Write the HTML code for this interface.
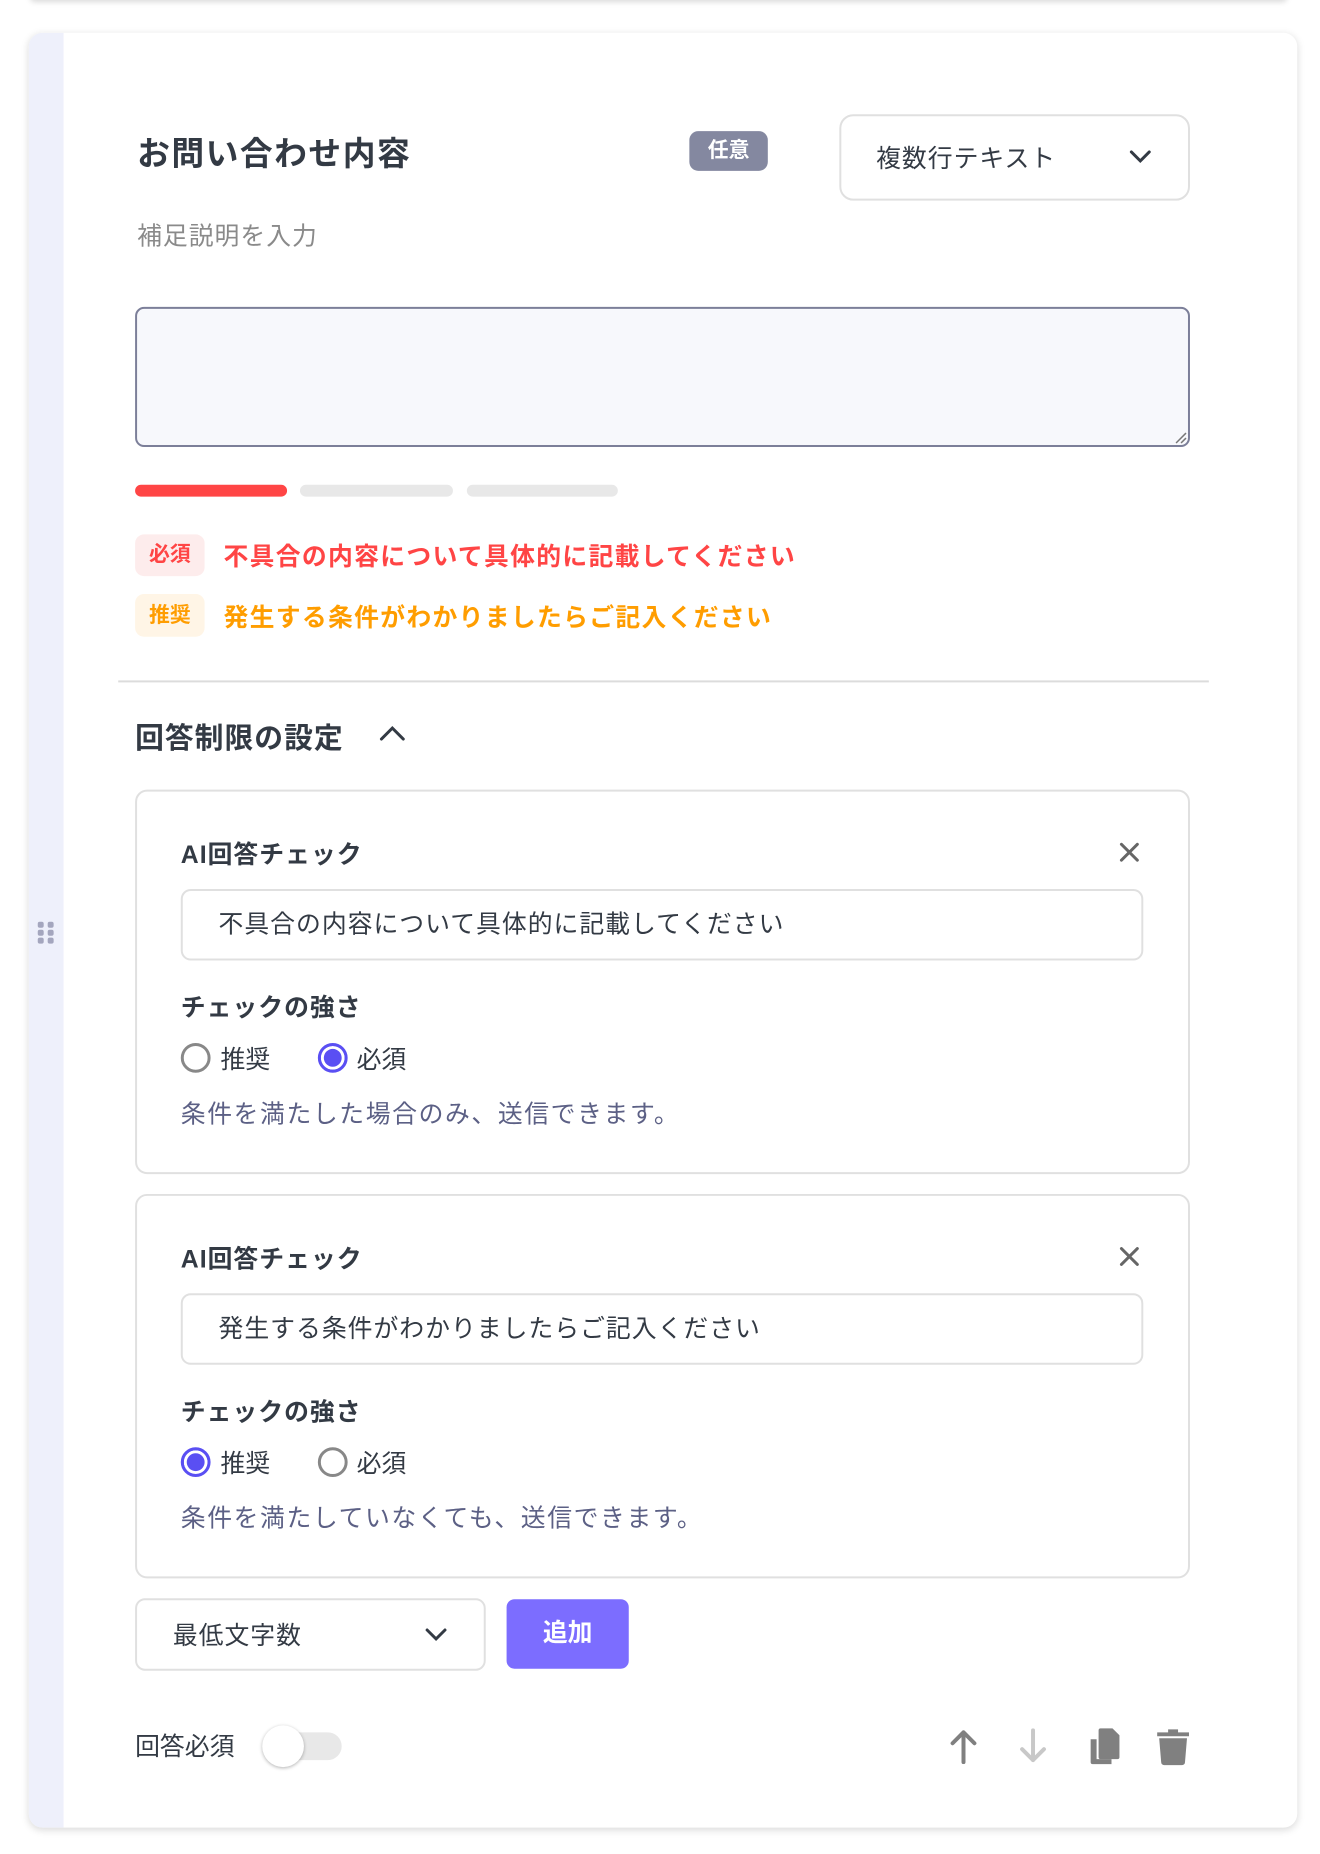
<!DOCTYPE html>
<html><head><meta charset="utf-8"><style>
*{box-sizing:border-box;margin:0;padding:0}
body{width:1320px;height:1852px;background:#fff;position:relative;overflow:hidden;font-family:"Liberation Sans","Noto Sans CJK JP",sans-serif;color:#333a44}
#w{position:absolute;left:0;top:0;width:1330px;height:1866px;transform:scale(0.9933);transform-origin:0 0}
.a{position:absolute;white-space:nowrap}
.card{position:absolute;left:29px;top:33px;width:1277px;height:1807px;background:#fff;border-radius:14px;box-shadow:0 2px 8px rgba(0,0,0,.15);overflow:hidden}
.strip{position:absolute;left:0;top:0;width:35px;height:100%;background:#eef0fb}
.box{position:absolute;left:136px;width:1062px;height:387px;border:2px solid #e0e0e0;border-radius:12px}
.inp{position:absolute;left:44px;width:969px;height:72px;border:2px solid #e0e0e0;border-radius:10px;font-size:25px;line-height:68px;padding-left:36px;color:#333a44;letter-spacing:1px}
.lb{position:absolute;left:44px;font-size:25px;font-weight:bold;letter-spacing:1px}
.radio{position:absolute;width:30px;height:30px;border-radius:50%;border:3px solid #888}
.radio.on{border:3px solid #5a4ff3;background:#5a4ff3;box-shadow:inset 0 0 0 3px #fff}
.rt{position:absolute;font-size:25px}
.help{position:absolute;left:44px;font-size:25px;color:#5c6085;letter-spacing:1.6px}
</style></head><body><div id="w">
<div class="a" style="left:30px;top:-10px;width:1266px;height:10px;box-shadow:0 2px 6px rgba(0,0,0,.15);border-radius:10px"></div>
<div class="card"><div class="strip"></div></div>
<svg class="a" style="left:36px;top:926px" width="22" height="28"><g fill="#a4a6be"><rect x="2" y="2" width="6" height="6" rx="2"/><rect x="12" y="2" width="6" height="6" rx="2"/><rect x="2" y="10" width="6" height="6" rx="2"/><rect x="12" y="10" width="6" height="6" rx="2"/><rect x="2" y="18" width="6" height="6" rx="2"/><rect x="12" y="18" width="6" height="6" rx="2"/></g></svg>

<div class="a" style="left:138px;top:128px;font-size:33px;font-weight:bold;letter-spacing:1.5px;color:#333a44">お問い合わせ内容</div>
<div class="a" style="left:694px;top:132px;width:79px;height:40px;background:#8488a0;border-radius:9px;color:#fff;font-weight:bold;font-size:21px;text-align:center;line-height:40px">任意</div>
<div class="a" style="left:845px;top:115px;width:353px;height:87px;border:2px solid #e0e0e0;border-radius:14px"></div>
<div class="a" style="left:882px;top:140px;font-size:25px;letter-spacing:1px">複数行テキスト</div>
<svg class="a" style="left:1136px;top:150px" width="24" height="16"><path d="M3 3l9 9 9-9" fill="none" stroke="#333a44" stroke-width="3" stroke-linecap="round"/></svg>
<div class="a" style="left:138px;top:218px;font-size:25px;color:#8a8a8a;letter-spacing:1px">補足説明を入力</div>
<div class="a" style="left:136px;top:309px;width:1062px;height:141px;background:#f7f8fc;border:2px solid #7c7f99;border-radius:9px"></div>
<svg class="a" style="left:1182px;top:434px" width="14" height="14"><path d="M2 12L12 2M7 12l5-5" stroke="#777" stroke-width="1.5"/></svg>
<div class="a" style="left:136px;top:488px;width:153px;height:12px;background:#ff4545;border-radius:6px"></div>
<div class="a" style="left:302px;top:488px;width:154px;height:12px;background:#e8e8e8;border-radius:6px"></div>
<div class="a" style="left:470px;top:488px;width:152px;height:12px;background:#e8e8e8;border-radius:6px"></div>
<div class="a" style="left:136px;top:538px;width:70px;height:42px;background:#fdecec;border-radius:9px;color:#ff4545;font-weight:bold;font-size:21px;text-align:center;line-height:42px">必須</div>
<div class="a" style="left:225px;top:541px;font-size:25px;font-weight:bold;color:#ff4545;letter-spacing:1.3px">不具合の内容について具体的に記載してください</div>
<div class="a" style="left:136px;top:598px;width:70px;height:43px;background:#fff5e6;border-radius:9px;color:#ff9d00;font-weight:bold;font-size:21px;text-align:center;line-height:43px">推奨</div>
<div class="a" style="left:225px;top:602px;font-size:25px;font-weight:bold;color:#ff9d00;letter-spacing:1.3px">発生する条件がわかりましたらご記入ください</div>
<div class="a" style="left:119px;top:685px;width:1098px;height:2px;background:#dcdcdc"></div>
<div class="a" style="left:136px;top:720px;font-size:29px;font-weight:bold;letter-spacing:1px">回答制限の設定</div>
<svg class="a" style="left:381px;top:730px" width="28" height="18"><path d="M3 14l11-11 11 11" fill="none" stroke="#333a44" stroke-width="3" stroke-linecap="round"/></svg>

<div class="box" style="top:795px">
<div class="lb" style="top:44px">AI回答チェック</div>
<svg class="a" style="left:988px;top:50px" width="22" height="22"><path d="M3 3l16 16M19 3L3 19" stroke="#666" stroke-width="3" stroke-linecap="round"/></svg>
<div class="inp" style="top:98px">不具合の内容について具体的に記載してください</div>
<div class="lb" style="top:198px">チェックの強さ</div>
<div class="radio" style="left:44px;top:253px"></div><div class="rt" style="left:84px;top:250px">推奨</div>
<div class="radio on" style="left:182px;top:253px"></div><div class="rt" style="left:221px;top:250px">必須</div>
<div class="help" style="top:305px">条件を満たした場合のみ、送信できます。</div>
</div>
<div class="box" style="top:1202px">
<div class="lb" style="top:44px">AI回答チェック</div>
<svg class="a" style="left:988px;top:50px" width="22" height="22"><path d="M3 3l16 16M19 3L3 19" stroke="#666" stroke-width="3" stroke-linecap="round"/></svg>
<div class="inp" style="top:98px">発生する条件がわかりましたらご記入ください</div>
<div class="lb" style="top:198px">チェックの強さ</div>
<div class="radio on" style="left:44px;top:253px"></div><div class="rt" style="left:84px;top:250px">推奨</div>
<div class="radio" style="left:182px;top:253px"></div><div class="rt" style="left:221px;top:250px">必須</div>
<div class="help" style="top:305px">条件を満たしていなくても、送信できます。</div>
</div>

<div class="a" style="left:136px;top:1609px;width:353px;height:73px;border:2px solid #e0e0e0;border-radius:10px"></div>
<div class="a" style="left:174px;top:1627px;font-size:25px;letter-spacing:1px">最低文字数</div>
<svg class="a" style="left:427px;top:1638px" width="24" height="16"><path d="M3 3l9 9 9-9" fill="none" stroke="#333a44" stroke-width="3" stroke-linecap="round"/></svg>
<div class="a" style="left:510px;top:1610px;width:123px;height:70px;background:#7c6dff;border-radius:8px;color:#fff;font-weight:bold;font-size:25px;text-align:center;line-height:68px">追加</div>

<div class="a" style="left:136px;top:1739px;font-size:25px">回答必須</div>
<div class="a" style="left:268px;top:1744px;width:76px;height:28px;background:#e8e8e8;border-radius:14px"></div>
<div class="a" style="left:264px;top:1737px;width:42px;height:42px;background:#fff;border-radius:50%;box-shadow:0 1px 4px rgba(0,0,0,.3)"></div>
<svg class="a" style="left:954px;top:1740px" width="32" height="36"><path d="M16 34V4M5 15L16 4l11 11" fill="none" stroke="#808080" stroke-width="4" stroke-linecap="round" stroke-linejoin="round"/></svg>
<svg class="a" style="left:1024px;top:1740px" width="32" height="36"><path d="M16 2v30M5 21l11 11 11-11" fill="none" stroke="#c8c8c8" stroke-width="4" stroke-linecap="round" stroke-linejoin="round"/></svg>
<svg class="a" style="left:1094px;top:1738px" width="36" height="40"><path d="M4 13h6v20h15v5H6a2 2 0 0 1-2-2z" fill="#808080"/><path d="M14 2h12l7 7v22a2 2 0 0 1-2 2H14a2 2 0 0 1-2-2V4a2 2 0 0 1 2-2z" fill="#808080"/></svg>
<svg class="a" style="left:1163px;top:1738px" width="36" height="40"><path d="M13 3h10v3h11v4H2V6h11z" fill="#808080"/><path d="M4 12h28l-2 24a3 3 0 0 1-3 3H9a3 3 0 0 1-3-3z" fill="#808080"/></svg>
</div></body></html>
